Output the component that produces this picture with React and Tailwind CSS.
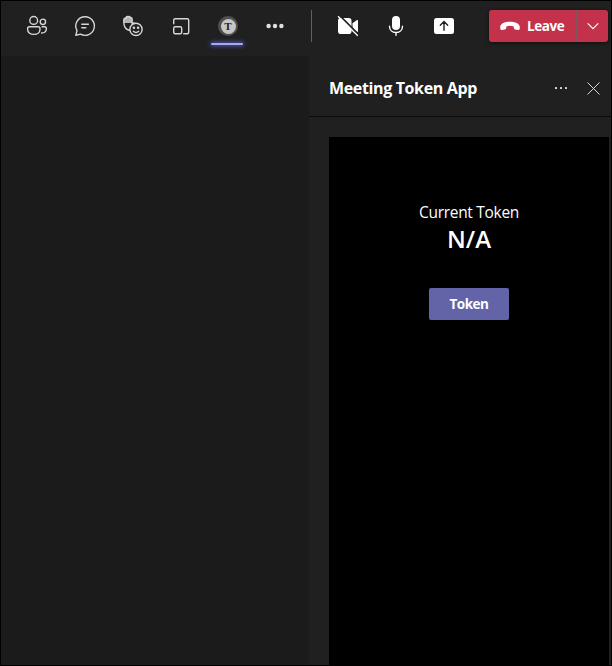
const ICON = "h-6 w-6 shrink-0";

function IconButton({ label, children, className = "w-12" }) {
  return (
    <button aria-label={label} className={`flex h-full shrink-0 items-center justify-center ${className}`}>
      {children}
    </button>
  );
}

function PeopleIcon() {
  return (
    <svg viewBox="0 0 24 24" className={ICON} fill="none" stroke="#d6d6d6" strokeWidth="1.4">
      <circle cx="8.7" cy="6.4" r="3.9" />
      <circle cx="17.9" cy="7.8" r="2.7" />
      <path d="M4.4 12.7h8.8a1.8 1.8 0 0 1 1.8 1.8v.7c0 3-2.4 5.2-6.2 5.2s-6.2-2.2-6.2-5.2v-.7a1.8 1.8 0 0 1 1.8-1.8z" />
      <path d="M16.6 12.7h3a1.8 1.8 0 0 1 1.8 1.8c0 3-1.9 4.7-5.4 4.4" />
    </svg>
  );
}

function ChatIcon() {
  return (
    <svg viewBox="0 0 24 24" className={ICON} fill="none" stroke="#d6d6d6" strokeWidth="1.4" strokeLinecap="round" strokeLinejoin="round">
      <path d="M12 2.7a9.3 9.3 0 1 1-4.5 17.4L2.8 21.3l1.2-4.7A9.3 9.3 0 0 1 12 2.7z" />
      <path d="M8.8 10.3h6.6M8.8 13.8h4" />
    </svg>
  );
}

function ReactionsIcon() {
  return (
    <svg viewBox="0 0 24 24" className={ICON} fill="none" stroke="#d6d6d6" strokeWidth="1.4" strokeLinecap="round" strokeLinejoin="round">
      <path d="M2.800 5.500q.2-2 2-1.600Q5.200 2 7 2.400q1.900-.4 2.200 1.200 1.800-.2 1.900 1.600V9H2.800z" fill="#b4b4b4" stroke="none" />
      <path d="M8.600 16.200c-3-.2-4.500-2-5.300-4.700-.5-2-.6-4-.5-5.800.1-1.400 1.400-2 2.200-1.400C5.200 2.500 6.200 2.300 7 2.700c.9-.7 2-.3 2.200.9 1.100-.3 1.900.4 1.900 1.600v4.300c.9-.9 2.100-.8 2.600-.1" />
      <circle cx="15" cy="15.400" r="6.100" />
      <path d="M12.300 17.200q2.700 2.500 5.400 0" />
      <circle cx="12.900" cy="13.700" r=".6" fill="#d6d6d6" />
      <circle cx="17.100" cy="13.700" r=".6" fill="#d6d6d6" />
    </svg>
  );
}

function RoomsIcon() {
  return (
    <svg viewBox="0 0 24 24" className={ICON} fill="none" stroke="#d6d6d6" strokeWidth="1.4">
      <path d="M4.700 10.200V6.200a1.500 1.500 0 0 1 1.500-1.500h12a1.500 1.500 0 0 1 1.500 1.500v12a1.500 1.500 0 0 1-1.500 1.500h-4" />
      <rect x="4.700" y="12.700" width="8" height="7" rx="1.500" />
    </svg>
  );
}

function TokenTab() {
  return (
    <div className="flex h-full w-8 shrink-0 flex-col items-center justify-between pt-[15px] pb-[10px]">
      <div className="ml-[2px] flex h-5 w-5 items-center justify-center rounded-full bg-[#505050]">
        <div className="flex h-[15px] w-[15px] items-center justify-center rounded-full bg-[#c6c6c6]">
          <span className="font-['Liberation_Serif',serif] text-[11px] leading-none font-bold text-[#222]">T</span>
        </div>
      </div>
      <div className="h-[2px] w-8 rounded-[1px] bg-[#a6a7f5] shadow-[0_0_4px_1px_#5558af]" />
    </div>
  );
}

function CameraOffIcon() {
  return (
    <svg viewBox="0 0 24 24" className={ICON}>
      <rect x="2" y="4" width="13.500" height="16" rx="2.800" fill="#fff" />
      <path d="M16.500 9.300l4.400-3.200q1.100-.6 1.100.6v10.600q0 1.200-1.100.6l-4.400-3.200z" fill="#fff" />
      <path d="M3 .8l20 20" stroke="#202020" strokeWidth="1.800" />
      <path d="M2 2.200l19.800 19.600" stroke="#fff" strokeWidth="1.300" />
    </svg>
  );
}

function MicIcon() {
  return (
    <svg viewBox="0 0 24 24" className={ICON} fill="none" stroke="#fff" strokeWidth="1.400" strokeLinecap="round">
      <rect x="8" y="2" width="8" height="14" rx="4" fill="#fff" stroke="none" />
      <path d="M5.500 12.200c0 3.900 2.700 6.300 6.500 6.300s6.500-2.400 6.500-6.300M12 18.700v2.600" />
    </svg>
  );
}

function ShareIcon() {
  return (
    <svg viewBox="0 0 24 24" className={ICON} fill="none">
      <rect x="2" y="4" width="20" height="16" rx="2.500" fill="#fff" />
      <path d="M12 16.300V8M8.300 11.300L12 7.600l3.700 3.700" stroke="#202020" strokeWidth="1.400" strokeLinecap="round" />
    </svg>
  );
}

function LeaveButton() {
  return (
    <div className="flex h-8 w-[119px] shrink-0 overflow-hidden rounded-[3px] bg-[#c4314b] text-white shadow-[0_1px_4px_rgba(0,0,0,0.6)]">
      <button className="flex w-[87px] items-center pl-[11px]">
        <svg viewBox="0 0 20 10" className="h-[10px] w-5 shrink-0" fill="#fff">
          <path d="M.2 6C.5 2.600 4.700.8 10 .8s9.500 1.800 9.800 5.200l-.1 1.800q-.2 1.400-1.600 1.200l-3-.5q-1.200-.2-1.300-1.400l-.1-1.700q-3.700-1.400-7.400 0l-.1 1.700q-.1 1.200-1.300 1.400l-3 .5Q.5 9.200.3 7.800z" />
        </svg>
        <span className="mt-px ml-[7px] text-[13.5px] font-bold tracking-[-0.45px]">Leave</span>
      </button>
      <button aria-label="Leave options" className="flex w-8 items-center justify-center border-l border-[#77595e]">
        <svg viewBox="0 0 12 8" className="h-2 w-3" fill="none" stroke="#fff" strokeWidth="1.100">
          <path d="M.7 1.300L6 6.600l5.300-5.300" />
        </svg>
      </button>
    </div>
  );
}

function Toolbar() {
  return (
    <header className="flex h-[55px] shrink-0 bg-[#202020] pl-3">
      <div className="flex h-[50px] items-center">
        <IconButton label="People"><PeopleIcon /></IconButton>
        <IconButton label="Chat"><ChatIcon /></IconButton>
        <IconButton label="Reactions"><ReactionsIcon /></IconButton>
        <IconButton label="Rooms"><RoomsIcon /></IconButton>
        <div className="ml-[6px] flex h-[54px] self-start"><TokenTab /></div>
        <IconButton label="More actions" className="ml-2 w-12">
          <svg viewBox="0 0 18 6" className="h-[6px] w-[18px]" fill="#e0e0e0">
            <circle cx="2.600" cy="3" r="2.200" />
            <circle cx="9" cy="3" r="2.200" />
            <circle cx="15.400" cy="3" r="2.200" />
          </svg>
        </IconButton>
        <div className="ml-3 h-8 w-px bg-[#616161]" />
        <IconButton label="Turn camera on" className="ml-3 w-12"><CameraOffIcon /></IconButton>
        <IconButton label="Mute"><MicIcon /></IconButton>
        <IconButton label="Share"><ShareIcon /></IconButton>
        <div className="ml-[21px]"><LeaveButton /></div>
      </div>
    </header>
  );
}

function SidePanel() {
  return (
    <aside className="flex w-[302px] shrink-0 flex-col bg-[#202020]">
      <div className="flex h-[61px] shrink-0 items-center border-b border-[#0c0c0c] pt-1 pr-[11px] pl-5">
        <h1 className="grow text-[16px] font-bold tracking-[-0.36px] whitespace-nowrap">Meeting Token App</h1>
        <button aria-label="Panel options">
          <svg viewBox="0 0 14 4" className="h-1 w-[14px]" fill="#e8e8e8">
            <rect x="1" y="1" width="2" height="2" rx=".4" />
            <rect x="6" y="1" width="2" height="2" rx=".4" />
            <rect x="11" y="1" width="2" height="2" rx=".4" />
          </svg>
        </button>
        <button aria-label="Close panel" className="ml-[19px]">
          <svg viewBox="0 0 13 13" className="h-[13px] w-[13px]" stroke="#d8d8d8" strokeWidth="1">
            <path d="M.5.5l12 12M12.500.5l-12 12" />
          </svg>
        </button>
      </div>
      <main className="mt-5 mr-[2px] ml-5 flex grow flex-col items-center bg-black pt-[65px]">
        <p className="text-[15.500px] leading-5 tracking-[-0.300px] whitespace-nowrap">Current Token</p>
        <p className="mt-px text-[24px] leading-8 font-semibold">N/A</p>
        <button className="mt-[33px] h-8 w-20 rounded-[2px] bg-[#6264a7] pt-px text-[13.500px] font-bold tracking-[-0.500px]">Token</button>
      </main>
    </aside>
  );
}

export default function App() {
  return (
    <div className="flex h-[666px] w-[612px] flex-col overflow-hidden border border-black bg-[#1b1b1b] font-['Open_Sans','Noto_Sans',sans-serif] text-white">
      <Toolbar />
      <div className="flex min-h-0 grow">
        <div className="grow bg-[#1b1b1b]" />
        <SidePanel />
      </div>
    </div>
  );
}
